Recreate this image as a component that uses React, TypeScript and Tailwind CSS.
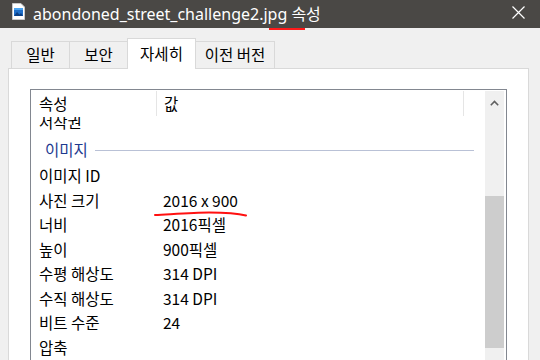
const font = { fontFamily: '"Noto Sans CJK KR", "Noto Sans", sans-serif' }
const titleFont = { fontFamily: '"Noto Sans", "Noto Sans CJK KR", sans-serif' }

type Row = { name: string; value?: string }

const rows: Row[] = [
  { name: "이미지 ID" },
  { name: "사진 크기", value: "2016 x 900" },
  { name: "너비", value: "2016픽셀" },
  { name: "높이", value: "900픽셀" },
  { name: "수평 해상도", value: "314 DPI" },
  { name: "수직 해상도", value: "314 DPI" },
  { name: "비트 수준", value: "24" },
  { name: "압축" },
]

const tabs = ["일반", "보안", "자세히", "이전 버전"]

export default function App() {
  return (
    <div
      className="relative flex h-[360px] w-[540px] flex-col overflow-hidden bg-[#f0f0f0] text-black"
      style={font}
    >
      <TitleBar />
      {/* red annotation under 속성 */}
      <div className="absolute left-[269px] top-[28px] h-[2px] w-[36px] bg-[#ff1a1a]" />

      <div className="flex h-[40px] shrink-0 items-end pl-[11px]">
        {tabs.map((t, i) =>
          i === 2 ? (
            <div
              key={t}
              className="relative z-10 -mb-px -ml-px flex h-[31px] w-[69px] items-start justify-center border border-b-0 border-[#d9d9d9] bg-white pt-[3px] text-[15.5px]"
            >
              {t}
            </div>
          ) : (
            <div
              key={t}
              className={`flex h-[27px] items-center justify-center border border-b-0 border-[#d9d9d9] text-[15.5px] ${
                i === 0 ? "w-[59px]" : i === 1 ? "-ml-px w-[59px]" : "-ml-px w-[80px]"
              }`}
            >
              {t}
            </div>
          )
        )}
      </div>

      <div className="ml-[8px] flex-1 w-[521px] border border-[#d9d9d9] bg-white pl-[21px] pt-[20px]">
        <div className="flex h-full w-[477px] border border-b-0 border-[#828790]">
          <div className="relative flex-1 overflow-hidden">
            <div className="relative z-10 flex h-[27px] items-center bg-white text-[15.5px]">
              <div className="w-[125px] pl-[8px]">속성</div>
              <div className="h-[25px] w-px bg-[#e5e5e5]" />
              <div className="flex-1 pl-[7px]">값</div>
              <div className="mr-[21px] h-[25px] w-px bg-[#e5e5e5]" />
            </div>
            {/* list is scrolled: the 저작권 row sits half under the header */}
            <div className="-mt-[8px]">
              <div className="flex h-[27.5px] items-center pb-[3px] pl-[8px] text-[15.5px]">저작권</div>
              <div className="flex h-[27px] items-center pl-[14px] pr-[11px] text-[15.5px] text-[#1e3a8f]">
                <span>이미지</span>
                <div className="ml-[7px] h-px flex-1 bg-[#b9c1d6]" />
              </div>
              {rows.map((r) => (
                <div key={r.name} className="flex h-[24.5px] items-center text-[15.5px]">
                  <div className="w-[126px] pl-[8px]">{r.name}</div>
                  <div className="pl-[6px]">{r.value}</div>
                </div>
              ))}
            </div>
            {/* red hand-drawn underline */}
            <svg
              className="absolute left-[123px] top-[121px]"
              width="94"
              height="8"
              viewBox="0 0 94 8"
            >
              <path
                d="M1 4 C 20 3, 40 1.5, 55 1.5 S 82 2, 92 4.5"
                fill="none"
                stroke="#ff1010"
                strokeWidth="2"
                strokeLinecap="round"
              />
            </svg>
          </div>
          <ScrollBar />
        </div>
      </div>
    </div>
  )
}

function TitleBar() {
  return (
    <div className="flex h-[28px] shrink-0 items-center bg-[#4a4845] pl-[12px] pr-[15px]">
      <svg width="13" height="17" viewBox="0 0 13 17" className="-mt-[6px]">
        <path d="M0.5 0.5 H9 L12.5 4 V16.5 H0.5 Z" fill="#ffffff" stroke="#c8c8c8" />
        <rect x="2" y="5" width="9" height="8" fill="#1f6fc9" />
        <path d="M2 13 L5 9 L7.5 11.5 L9 10 L11 13 Z" fill="#0b3f85" />
        <rect x="2" y="5" width="9" height="2" fill="#4aa3f0" />
      </svg>
      <span className="ml-[8px] text-[16px] leading-none text-white" style={titleFont}>
        abondoned_street_challenge2.jpg 속성
      </span>
      <svg width="13" height="13" viewBox="0 0 13 13" className="ml-auto -mt-[4px]">
        <path d="M0.5 0.5 L12.5 12.5 M12.5 0.5 L0.5 12.5" stroke="#ffffff" strokeWidth="1.2" />
      </svg>
    </div>
  )
}

function ScrollBar() {
  return (
    <div className="mr-[2px] mt-px flex w-[19px] flex-col bg-[#f0f0f0]">
      <div className="flex h-[24px] items-center justify-center">
        <svg width="9" height="6" viewBox="0 0 9 6">
          <path d="M0.8 5.2 L4.5 1.5 L8.2 5.2" fill="none" stroke="#606060" strokeWidth="1.6" />
        </svg>
      </div>
      <div className="h-[81px]" />
      <div className="h-[152px] bg-[#cdcdcd]" />
      <div className="flex-1" />
    </div>
  )
}
